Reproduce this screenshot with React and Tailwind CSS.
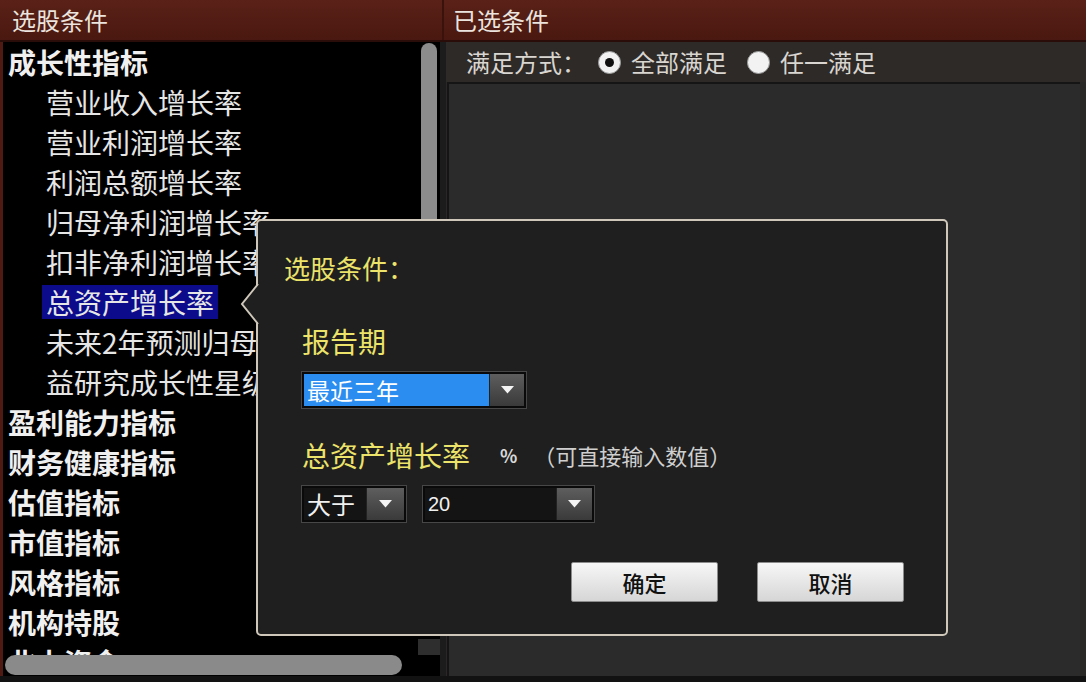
import React from 'react';

const groups = [
  {
    title: '成长性指标',
    items: [
      '营业收入增长率',
      '营业利润增长率',
      '利润总额增长率',
      '归母净利润增长率',
      '扣非净利润增长率',
      '总资产增长率',
      '未来2年预测归母净利润增长率',
      '益研究成长性星级',
    ],
  },
  { title: '盈利能力指标', items: [] },
  { title: '财务健康指标', items: [] },
  { title: '估值指标', items: [] },
  { title: '市值指标', items: [] },
  { title: '风格指标', items: [] },
  { title: '机构持股', items: [] },
  { title: '北上资金', items: [] },
];

const selected = '总资产增长率';

function DropArrow({ className = '' }) {
  return (
    <div className={`flex items-center justify-center bg-gradient-to-b from-[#5e5e5e] to-[#3a3a3a] border-l border-[#222] ${className}`}>
      <svg width="13" height="8" viewBox="0 0 13 8">
        <path d="M0 0 H13 L6.5 7.5 Z" fill="#f4f4f4" />
      </svg>
    </div>
  );
}

function Radio({ checked }) {
  return (
    <span className="w-[23px] h-[23px] rounded-full bg-[#f2f2f2] border border-[#9a9a9a] flex items-center justify-center">
      {checked && <span className="w-[9px] h-[9px] rounded-full bg-[#111]" />}
    </span>
  );
}

function ConditionPopup() {
  return (
    <div className="absolute left-[256px] top-[219px] w-[692px] h-[417px] bg-[#1f1f1f] border-2 border-[#cfc7ba] rounded-[5px] pl-[26px] pt-[32px]">
      {/* pointer towards the selected row */}
      <svg className="absolute left-[-18px] top-[62px]" width="20" height="44" viewBox="0 0 20 44">
        <polygon points="20,0 1,21 20,42" fill="#1f1f1f" />
        <polyline points="18,1 2,21 18,41" fill="none" stroke="#cfc7ba" strokeWidth="2" />
      </svg>

      <div className="text-[26px] leading-[30px] text-[#ece36a]">选股条件：</div>

      <div className="pl-[18px]">
        <div className="mt-[41px] text-[28px] leading-[34px] text-[#ece36a]">报告期</div>
        <div className="mt-[14px] w-[224px] h-[36px] flex border-2 border-[#0a0a0a] outline outline-1 outline-[#474747] bg-[#111]">
          <div className="flex-1 bg-[#2b8df0] text-white text-[23px] leading-[32px] pl-[3px]">最近三年</div>
          <DropArrow className="w-[35px]" />
        </div>

        <div className="mt-[30px] h-[34px] flex items-center">
          <span className="text-[28px] leading-[34px] text-[#ece36a]">总资产增长率</span>
          <span className="ml-[30px] text-[18px] font-bold text-[#d8d8d8]">%</span>
          <span className="ml-[16px] text-[22px] text-[#cfcfcf]">（可直接输入数值）</span>
        </div>

        <div className="mt-[14px] flex gap-[17px]">
          <div className="w-[104px] h-[36px] flex border-2 border-[#0a0a0a] outline outline-1 outline-[#474747] bg-[#141414]">
            <div className="flex-1 text-[24px] leading-[32px] text-[#f0f0f0] pl-[3px]">大于</div>
            <DropArrow className="w-[38px]" />
          </div>
          <div className="w-[171px] h-[36px] flex border-2 border-[#0a0a0a] outline outline-1 outline-[#474747] bg-[#141414]">
            <div className="flex-1 text-[20px] leading-[32px] text-[#f0f0f0] pl-[3px] font-['Liberation_Sans',sans-serif]">20</div>
            <DropArrow className="w-[36px]" />
          </div>
        </div>

        <div className="mt-[40px] flex gap-[39px] pl-[269px]">
          {['确定', '取消'].map(label => (
            <button
              key={label}
              className="w-[147px] h-[40px] rounded-[2px] border border-[#8c8c8c] bg-gradient-to-b from-[#f7f7f7] to-[#d6d6d6] text-[22px] font-medium text-[#111]"
            >
              {label}
            </button>
          ))}
        </div>
      </div>
    </div>
  );
}

export default function App() {
  return (
    <div className="relative w-[1086px] h-[682px] overflow-hidden flex flex-col bg-[#111] font-['Noto_Sans_CJK_SC','Noto_Sans',sans-serif]">
      {/* title bar */}
      <div className="flex h-[42px] bg-gradient-to-b from-[#5a2118] to-[#4a1810] border-b-2 border-[#2a0c08] text-[24px] text-[#ebe4de]">
        <div className="w-[444px] pl-[12px] flex items-center border-r-2 border-[#3a120c]">选股条件</div>
        <div className="flex-1 pl-[9px] flex items-center">已选条件</div>
      </div>

      <div className="flex flex-1 min-h-0">
        {/* condition tree */}
        <div className="w-[446px] flex flex-col bg-black border-l-[3px] border-[#4f1a12]">
          <div className="flex flex-1 min-h-0">
            <div className="flex-1 overflow-hidden whitespace-nowrap">
              {groups.map(g => (
                <div key={g.title}>
                  <div className="h-[40px] pl-[5px] flex items-center text-[28px] font-bold text-[#f0f0f0]">{g.title}</div>
                  {g.items.map(item => (
                    <div key={item} className="h-[40px] pl-[39px] flex items-center text-[28px] text-[#e6e6e6]">
                      <span className={item === selected ? 'bg-[#0b0b8c] px-[4px] leading-[34px]' : 'px-[4px]'}>{item}</span>
                    </div>
                  ))}
                </div>
              ))}
            </div>
            <div className="w-[22px] flex flex-col bg-black">
              <div className="ml-[3px] mt-[1px] w-[16px] h-[480px] rounded-t-full bg-[#8c8c8c]" />
              <div className="flex-1" />
              <div className="h-[16px] bg-[#2e2e2e]" />
            </div>
            <div className="w-[6px] bg-[#1c1c1c]" />
          </div>
          <div className="h-[21px] flex bg-black">
            <div className="ml-[2px] w-[397px] h-[20px] rounded-full bg-[#8a8a8a]" />
            <div className="flex-1" />
            <div className="w-[6px] bg-[#1c1c1c]" />
          </div>
        </div>

        {/* selected conditions */}
        <div className="flex-1 flex flex-col bg-[#2a2826]">
          <div className="h-[40px] flex items-center pl-[20px] bg-[#2d2a27] text-[24px] text-[#d9d5d0]">
            <span>满足方式：</span>
            <span className="ml-[12px]"><Radio checked /></span>
            <span className="ml-[10px]">全部满足</span>
            <span className="ml-[20px]"><Radio /></span>
            <span className="ml-[10px]">任一满足</span>
          </div>
          <div className="flex-1 ml-[1px] mr-[6px] border-t-2 border-l-2 border-[#151515] bg-[#2b2b2b]" />
        </div>
      </div>
      <div className="h-[6px] bg-[#121212]" />

      <ConditionPopup />
    </div>
  );
}
